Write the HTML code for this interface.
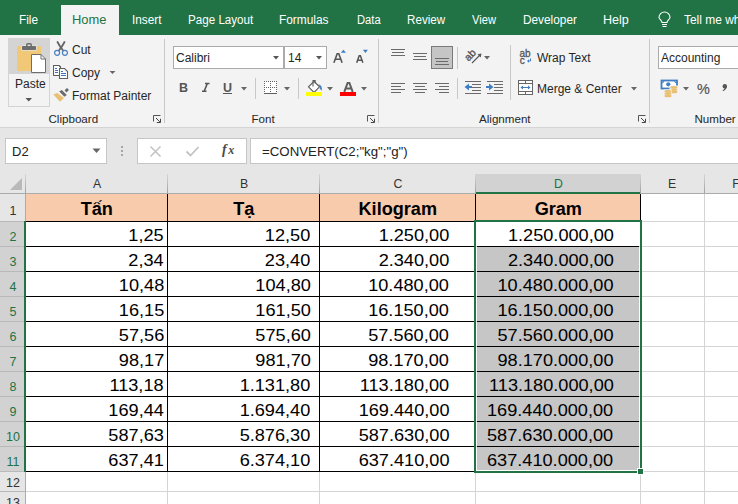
<!DOCTYPE html>
<html><head><meta charset="utf-8">
<style>
*{margin:0;padding:0;box-sizing:border-box}
html,body{width:738px;height:504px;overflow:hidden;background:#fff;font-family:"Liberation Sans",sans-serif}
.a{position:absolute}
.t{position:absolute;white-space:nowrap;line-height:1}
#tabs{left:0;top:0;width:738px;height:35px;background:#217346}
.tab{color:#fff;font-size:12.5px;top:14px;transform-origin:0 0}
#rib{left:0;top:35px;width:738px;height:92px;background:#f3f3f3}
.rl{color:#262626;font-size:12px}
.sep{position:absolute;width:1px;background:#c8c8c8}
#fb{left:0;top:127px;width:738px;height:67px;background:#e6e6e6}
.hd{top:178px;font-size:12.3px;text-align:center}
.rn{left:0.5px;width:25px;text-align:center;font-size:12.5px}
.hb{top:201px;font-size:17.5px;font-weight:bold;text-align:center;color:#000;transform:translateX(0.8px) scaleX(1.035)}
.dv{font-size:17.3px;color:#000;transform:scaleX(1.05);transform-origin:100% 0}
</style></head><body>
<!-- tab bar -->
<div class="a" id="tabs"></div>
<div class="a" style="left:61px;top:5px;width:58px;height:30px;background:#f3f3f3"></div>
<div class="t tab" style="left:19.00px;transform:scaleX(0.947);color:#fff">File</div>
<div class="t tab" style="left:72.00px;transform:scaleX(1.031);color:#217346">Home</div>
<div class="t tab" style="left:132.20px;transform:scaleX(0.942);color:#fff">Insert</div>
<div class="t tab" style="left:188.20px;transform:scaleX(0.930);color:#fff">Page Layout</div>
<div class="t tab" style="left:279.00px;transform:scaleX(0.951);color:#fff">Formulas</div>
<div class="t tab" style="left:356.60px;transform:scaleX(0.896);color:#fff">Data</div>
<div class="t tab" style="left:407.20px;transform:scaleX(0.932);color:#fff">Review</div>
<div class="t tab" style="left:472.00px;transform:scaleX(0.893);color:#fff">View</div>
<div class="t tab" style="left:523.00px;transform:scaleX(0.946);color:#fff">Developer</div>
<div class="t tab" style="left:603.00px;transform:scaleX(1.005);color:#fff">Help</div>
<div class="t tab" style="left:683.9px;transform:scaleX(0.955);color:#fff">Tell me what</div>
<svg class="a" style="left:656px;top:10px" width="17" height="20" viewBox="0 0 17 20">
  <path d="M6 12.5 C6 10.5 3 9 3 7.5 A5.5 5.5 0 0 1 14 7.5 C14 9 11 10.5 11 12.5 Z" fill="none" stroke="#fff" stroke-width="1.1"/>
  <path d="M6 14.5 H11 M6.5 16.5 H10.5" stroke="#fff" stroke-width="1"/>
</svg>
<!-- ribbon -->
<div class="a" id="rib"></div>
<div class="a" style="left:0;top:127px;width:738px;height:1px;background:#d4d4d4"></div>
<!-- Clipboard group -->
<div class="a" style="left:8px;top:38px;width:42px;height:69px;border:1px solid #d4d4d4;background:#f3f3f3"></div>
<div class="a" style="left:8px;top:38px;width:42px;height:36px;background:#d4d4d4"></div>
<svg class="a" style="left:8px;top:38px" width="42" height="36" viewBox="0 0 42 36">
  <rect x="9" y="8" width="24" height="25" rx="1.5" fill="#f0c877"/>
  <rect x="13.3" y="7.3" width="15.4" height="5.4" rx="1" fill="#e4e4e4"/>
  <rect x="14" y="8" width="14" height="4" rx="0.8" fill="#6d6d6d"/>
  <rect x="18.75" y="5.75" width="4.5" height="3" rx="1" fill="none" stroke="#6d6d6d" stroke-width="1.5"/>
  <path d="M23.5 16.5 H33 L37.5 21 V34.5 H23.5 Z" fill="#fff" stroke="#6d6d6d" stroke-width="1"/>
  <path d="M33 16.5 V21 H37.5" fill="none" stroke="#6d6d6d" stroke-width="1"/>
</svg>
<div class="t rl" style="left:15px;top:78px;font-size:12px">Paste</div>
<svg class="a" style="left:25px;top:97px" width="8" height="5"><path d="M0.5 1 H7 L3.75 4.5 Z" fill="#555"/></svg>

<svg class="a" style="left:53px;top:40px" width="17" height="17" viewBox="0 0 17 17">
  <path d="M4.5 2 Q6.5 6 10.3 10.8 M11.5 2 Q9.5 6 5.7 10.8" stroke="#666" stroke-width="1.8" fill="none" stroke-linecap="round"/>
  <circle cx="4.1" cy="12.8" r="2.5" fill="#f3f3f3" stroke="#4a80c0" stroke-width="1.2"/>
  <circle cx="11.9" cy="12.8" r="2.5" fill="#f3f3f3" stroke="#4a80c0" stroke-width="1.2"/>
</svg>
<div class="t rl" style="left:72px;top:44px">Cut</div>
<svg class="a" style="left:53px;top:64px" width="17" height="16" viewBox="0 0 17 16">
  <path d="M0.5 11.5 V1.5 H6 L7.5 3 V4.5" fill="#fff" stroke="#5f5f5f" stroke-width="1.1"/>
  <rect x="0.5" y="1.5" width="6" height="10" fill="#fff"/>
  <path d="M0.5 11.5 V1.5 H6 L7.5 3 V4.5 M0.5 11.5 H6" fill="none" stroke="#5f5f5f" stroke-width="1.1"/>
  <path d="M6.5 14.5 V4.5 H11.5 L14.5 7.5 V14.5 Z" fill="#fff" stroke="#5f5f5f" stroke-width="1.1"/>
  <path d="M2 4.5 H4 M2 6.5 H5 M2 8.5 H5 M8 7.5 H10 M8 9.5 H13 M8 11.5 H13" stroke="#3a75b8" stroke-width="1.1"/>
</svg>
<div class="t rl" style="left:72px;top:67px">Copy</div>
<svg class="a" style="left:109px;top:70px" width="7" height="5"><path d="M0.5 1 H6.5 L3.5 4 Z" fill="#666"/></svg>
<svg class="a" style="left:53px;top:87px" width="17" height="16" viewBox="0 0 17 16">
  <path d="M0.3 7.5 L4.2 6 L11 11 L7 14.7 Z" fill="#e9bf72"/>
  <path d="M6.2 4.6 L8.8 3.1 L13.8 7.9 L11.4 9.7 Z" fill="#6a6a6a"/>
  <path d="M14 1.1 L16 2.9 L13.4 5.5 L11.6 3.3 Z" fill="#6a6a6a"/>
</svg>
<div class="t rl" style="left:72px;top:90px">Format Painter</div>
<div class="t rl" style="left:48.5px;top:113px;font-size:11.6px">Clipboard</div>
<svg class="a" style="left:153px;top:115px" width="9" height="9" viewBox="0 0 9 9">
  <path d="M0.5 0.5 H7.5 M0.5 0.5 V6.5" stroke="#555" stroke-width="1" fill="none"/>
  <path d="M3 3 L6.8 6.8 M3.8 7.5 H7.5 V3.8" stroke="#444" stroke-width="1" fill="none"/>
</svg>
<div class="sep" style="left:164px;top:39px;height:84px"></div>

<!-- Font group -->
<div class="a" style="left:173px;top:46px;width:111px;height:23px;background:#fff;border:1px solid #ababab"></div>
<div class="a" style="left:284px;top:46px;width:43px;height:23px;background:#fff;border:1px solid #ababab"></div>
<div class="t" style="left:176px;top:52px;font-size:12px;color:#262626">Calibri</div>
<svg class="a" style="left:273px;top:56px" width="7" height="4"><path d="M0 0 H6 L3 3.5 Z" fill="#555"/></svg>
<div class="t" style="left:288px;top:52px;font-size:12px;color:#262626">14</div>
<svg class="a" style="left:316px;top:56px" width="7" height="4"><path d="M0 0 H6 L3 3.5 Z" fill="#555"/></svg>
<svg class="a" style="left:328px;top:44px" width="46" height="26" viewBox="0 0 46 26">
  <path d="M5.9 18.8 L9.2 9.8 H10.8 L14.1 18.8 M7.6 15.3 H12.4" stroke="#555" stroke-width="1.6" fill="none"/>
  <path d="M12.8 8.8 H18 L15.4 5.8 Z" fill="#3f7ec2"/>
  <path d="M28.7 18.8 L31.2 11.7 H32.4 L34.9 18.8 M30.1 16.2 H33.5" stroke="#555" stroke-width="1.5" fill="none"/>
  <path d="M34.9 5.8 H39.9 L37.4 8.9 Z" fill="#3f7ec2"/>
</svg>
<div class="t" style="left:179px;top:82px;font-size:12.5px;font-weight:bold;color:#555">B</div>
<svg class="a" style="left:200px;top:82px" width="12" height="12" viewBox="0 0 12 12"><path d="M5 1.5 H9.5 M2 9.3 H6.5 M7.3 1.5 L4.2 9.3" stroke="#555" stroke-width="1.6" fill="none"/></svg>
<div class="t" style="left:223px;top:82px;font-size:12.5px;font-weight:bold;color:#555">U</div>
<div class="a" style="left:223px;top:93px;width:9px;height:1px;background:#555"></div>
<svg class="a" style="left:241px;top:87px" width="7" height="4"><path d="M0 0 H6 L3 3.5 Z" fill="#666"/></svg>
<div class="sep" style="left:255px;top:78px;height:21px"></div>
<svg class="a" style="left:264px;top:81px" width="14" height="14"><rect x="0" y="0" width="13" height="13" fill="#fff"/><rect x="0" y="0" width="1" height="1" fill="#606060"/><rect x="2" y="0" width="1" height="1" fill="#606060"/><rect x="4" y="0" width="1" height="1" fill="#606060"/><rect x="6" y="0" width="1" height="1" fill="#606060"/><rect x="8" y="0" width="1" height="1" fill="#606060"/><rect x="10" y="0" width="1" height="1" fill="#606060"/><rect x="12" y="0" width="1" height="1" fill="#606060"/><rect x="0" y="2" width="1" height="1" fill="#606060"/><rect x="6" y="2" width="1" height="1" fill="#606060"/><rect x="12" y="2" width="1" height="1" fill="#606060"/><rect x="0" y="4" width="1" height="1" fill="#606060"/><rect x="6" y="4" width="1" height="1" fill="#606060"/><rect x="12" y="4" width="1" height="1" fill="#606060"/><rect x="0" y="6" width="1" height="1" fill="#606060"/><rect x="2" y="6" width="1" height="1" fill="#606060"/><rect x="4" y="6" width="1" height="1" fill="#606060"/><rect x="6" y="6" width="1" height="1" fill="#606060"/><rect x="8" y="6" width="1" height="1" fill="#606060"/><rect x="10" y="6" width="1" height="1" fill="#606060"/><rect x="12" y="6" width="1" height="1" fill="#606060"/><rect x="0" y="8" width="1" height="1" fill="#606060"/><rect x="6" y="8" width="1" height="1" fill="#606060"/><rect x="12" y="8" width="1" height="1" fill="#606060"/><rect x="0" y="10" width="1" height="1" fill="#606060"/><rect x="6" y="10" width="1" height="1" fill="#606060"/><rect x="12" y="10" width="1" height="1" fill="#606060"/><rect x="0" y="12" width="13" height="1" fill="#606060"/></svg>
<svg class="a" style="left:284px;top:87px" width="7" height="4"><path d="M0 0 H6 L3 3.5 Z" fill="#666"/></svg>
<div class="sep" style="left:298px;top:78px;height:21px"></div>
<svg class="a" style="left:305px;top:79px" width="18" height="18" viewBox="0 0 18 18">
  <path d="M3.5 7.8 L9 2.3 L14.5 7.8 L9 13.3 Z" fill="#fff" stroke="#5f5f5f" stroke-width="1.2"/>
  <path d="M8 7.5 V1.5 H10.2 V4.5" fill="none" stroke="#5f5f5f" stroke-width="1.1"/>
  <path d="M13.3 5.2 Q17.6 6 16.8 11.8 L14.6 9.6 L15.2 8 Z" fill="#3f7ec2"/>
  <rect x="1" y="13" width="16" height="4" fill="#ffff00"/>
</svg>
<svg class="a" style="left:327px;top:87px" width="7" height="4"><path d="M0 0 H6 L3 3.5 Z" fill="#666"/></svg>
<svg class="a" style="left:339px;top:79px" width="18" height="18" viewBox="0 0 18 18">
  <path d="M5.3 12.8 L8.6 3.9 H10.4 L13.7 12.8 M6.8 9.6 H12.2" stroke="#5f5f5f" stroke-width="2" fill="none"/>
  <rect x="1" y="13" width="16" height="4" fill="#ff0000"/>
</svg>
<svg class="a" style="left:361px;top:87px" width="7" height="4"><path d="M0 0 H6 L3 3.5 Z" fill="#666"/></svg>
<div class="t rl" style="left:251.5px;top:113px;font-size:11.6px">Font</div>
<svg class="a" style="left:367px;top:115px" width="9" height="9" viewBox="0 0 9 9">
  <path d="M0.5 0.5 H7.5 M0.5 0.5 V6.5" stroke="#555" stroke-width="1" fill="none"/>
  <path d="M3 3 L6.8 6.8 M3.8 7.5 H7.5 V3.8" stroke="#444" stroke-width="1" fill="none"/>
</svg>
<div class="sep" style="left:378px;top:39px;height:84px"></div>

<!-- Alignment group -->
<svg class="a" style="left:390px;top:48px" width="16" height="12"><path d="M1 1.5 H15 M2 4.5 H14 M1 7.5 H15" stroke="#6a6a6a" stroke-width="1"/></svg>
<svg class="a" style="left:412px;top:52px" width="16" height="12"><path d="M1 1.5 H15 M2 4.5 H14 M1 7.5 H15" stroke="#6a6a6a" stroke-width="1"/></svg>
<div class="a" style="left:431px;top:46px;width:22px;height:23px;background:#c5c5c5;border:1px solid #7a7a7a"></div>
<svg class="a" style="left:434px;top:57px" width="16" height="12"><path d="M1 1.5 H15 M2 4.5 H14 M1 7.5 H15" stroke="#6a6a6a" stroke-width="1"/></svg>
<div class="sep" style="left:457px;top:47px;height:22px"></div>
<svg class="a" style="left:462px;top:46px" width="24" height="22" viewBox="0 0 24 22">
  <text x="8.5" y="12.5" text-anchor="middle" font-family="Liberation Sans" font-size="10.5" fill="#555" stroke="#555" stroke-width="0.35" transform="rotate(-45 8.5 9.5)">ab</text>
  <path d="M10 17 L18.5 8.5" stroke="#555" stroke-width="1.1" fill="none"/>
  <path d="M19.5 7.5 L15.5 8.3 L18.7 11.5 Z" fill="#555"/>
</svg>
<svg class="a" style="left:484px;top:56px" width="7" height="4"><path d="M0 0 H6 L3 3.5 Z" fill="#666"/></svg>

<svg class="a" style="left:390px;top:82px" width="16" height="14"><path d="M1 1.5 H15 M1 4.5 H11 M1 7.5 H15 M1 10.5 H11" stroke="#6a6a6a" stroke-width="1"/></svg>
<svg class="a" style="left:412px;top:82px" width="16" height="14"><path d="M1 1.5 H15 M3 4.5 H13 M1 7.5 H15 M3 10.5 H13" stroke="#6a6a6a" stroke-width="1"/></svg>
<svg class="a" style="left:434px;top:82px" width="16" height="14"><path d="M1 1.5 H15 M5 4.5 H15 M1 7.5 H15 M5 10.5 H15" stroke="#6a6a6a" stroke-width="1"/></svg>
<div class="sep" style="left:457px;top:78px;height:21px"></div>
<svg class="a" style="left:464px;top:80px" width="18" height="15" viewBox="0 0 18 15">
  <path d="M1 1.5 H17 M8 4.5 H17 M8 7.5 H17 M8 10.5 H17 M1 13.5 H17" stroke="#6a6a6a" stroke-width="1"/>
  <path d="M0.5 7 L5 3.5 V10.5 Z" fill="#3f7ec2"/><path d="M4 7 H8" stroke="#3f7ec2" stroke-width="2"/>
</svg>
<svg class="a" style="left:486px;top:80px" width="18" height="15" viewBox="0 0 18 15">
  <path d="M1 1.5 H17 M8 4.5 H17 M8 7.5 H17 M8 10.5 H17 M1 13.5 H17" stroke="#6a6a6a" stroke-width="1"/>
  <path d="M7.5 7 L3 3.5 V10.5 Z" fill="#3f7ec2"/><path d="M0 7 H4" stroke="#3f7ec2" stroke-width="2"/>
</svg>
<div class="sep" style="left:510px;top:45px;height:55px"></div>
<svg class="a" style="left:517px;top:48px" width="18" height="18" viewBox="0 0 18 18">
  <text x="2.5" y="8.6" font-family="Liberation Sans" font-size="10" fill="#555" stroke="#555" stroke-width="0.3">ab</text>
  <text x="2.8" y="15.8" font-family="Liberation Sans" font-size="10" fill="#555" stroke="#555" stroke-width="0.3">c</text>
  <path d="M13.5 10.5 V13 H11" stroke="#3f7ec2" stroke-width="1" fill="none"/><path d="M10 13 L12 11.3 V14.7 Z" fill="#3f7ec2"/>
</svg>
<div class="t rl" style="left:537px;top:52px">Wrap Text</div>
<svg class="a" style="left:517px;top:79px" width="17" height="17" viewBox="0 0 17 17">
  <rect x="1.5" y="1.5" width="14" height="14" fill="#fff" stroke="#666" stroke-width="1"/>
  <path d="M1.5 4.5 H15.5 M1.5 12.5 H15.5 M8.5 1.5 V4.5 M8.5 12.5 V15.5" stroke="#666" stroke-width="1"/>
  <path d="M4.5 8.5 H12.5" stroke="#3f7ec2" stroke-width="1"/><path d="M3.5 8.5 L6 6.5 V10.5 Z M13.5 8.5 L11 6.5 V10.5 Z" fill="#3f7ec2"/>
</svg>
<div class="t rl" style="left:537px;top:83px">Merge &amp; Center</div>
<svg class="a" style="left:631px;top:87px" width="7" height="4"><path d="M0 0 H6 L3 3.5 Z" fill="#666"/></svg>
<div class="t rl" style="left:479px;top:113px;font-size:11.6px">Alignment</div>
<svg class="a" style="left:638px;top:115px" width="9" height="9" viewBox="0 0 9 9">
  <path d="M0.5 0.5 H7.5 M0.5 0.5 V6.5" stroke="#555" stroke-width="1" fill="none"/>
  <path d="M3 3 L6.8 6.8 M3.8 7.5 H7.5 V3.8" stroke="#444" stroke-width="1" fill="none"/>
</svg>
<div class="sep" style="left:649px;top:39px;height:84px"></div>

<!-- Number group -->
<div class="a" style="left:658px;top:46px;width:90px;height:23px;background:#fff;border:1px solid #ababab"></div>
<div class="t" style="left:661px;top:52px;font-size:12px;color:#262626">Accounting</div>
<svg class="a" style="left:660px;top:79px" width="19" height="19" viewBox="0 0 19 19">
  <rect x="1.5" y="1.5" width="15.5" height="8" fill="#fff" stroke="#3f7ec2" stroke-width="1.8"/>
  <path d="M1.5 4 Q4 4 4 1.5 M17 4 Q14.5 4 14.5 1.5" stroke="#3f7ec2" stroke-width="1" fill="none"/>
  <circle cx="8.3" cy="5.3" r="2.1" fill="#3f7ec2"/>
  <rect x="9.5" y="6.5" width="8.5" height="8" fill="#f3f3f3"/>
  <ellipse cx="13.8" cy="8.3" rx="3.6" ry="1.3" fill="#e9bf72"/>
  <ellipse cx="13.8" cy="10.6" rx="3.6" ry="1.3" fill="#e9bf72"/>
  <ellipse cx="13.8" cy="12.9" rx="3.6" ry="1.3" fill="#e9bf72"/>
  <rect x="4" y="10.5" width="8" height="8.5" fill="#f3f3f3"/>
  <ellipse cx="8" cy="12.3" rx="3.6" ry="1.3" fill="#e9bf72"/>
  <ellipse cx="8" cy="14.6" rx="3.6" ry="1.3" fill="#e9bf72"/>
  <ellipse cx="8" cy="16.9" rx="3.6" ry="1.3" fill="#e9bf72"/>
</svg>
<svg class="a" style="left:683px;top:87px" width="7" height="4"><path d="M0 0 H6 L3 3.5 Z" fill="#666"/></svg>
<div class="t" style="left:697px;top:81px;font-size:15.5px;color:#555;-webkit-text-stroke:0.2px #555;transform:scaleX(0.93);transform-origin:0 0">%</div>
<svg class="a" style="left:720px;top:82px" width="9" height="11" viewBox="0 0 9 11"><circle cx="4.8" cy="4.2" r="2.2" fill="#555"/><path d="M6.8 4.5 Q6.6 7.5 3 9.2 L2.6 8.5 Q4.8 7 4.8 5.5 Z" fill="#555"/></svg>
<div class="t rl" style="left:694.5px;top:113px;font-size:11.6px">Number</div>

<!-- formula bar area -->
<div class="a" style="left:0;top:128px;width:738px;height:66px;background:#e6e6e6"></div>
<div class="a" style="left:5px;top:138px;width:102px;height:26px;background:#fff;border:1px solid #c6c6c6"></div>
<div class="t" style="left:12px;top:145px;font-size:13px;color:#222">D2</div>
<div class="a" style="left:137px;top:138px;width:110px;height:26px;background:#fff;border:1px solid #c6c6c6"></div>
<div class="a" style="left:250px;top:138px;width:500px;height:26px;background:#fff;border:1px solid #c6c6c6"></div>
<div class="t" style="left:262px;top:145px;font-size:13px;color:#222;transform:scaleX(1.02);transform-origin:0 0">=CONVERT(C2;"kg";"g")</div>
<svg class="a" style="left:92px;top:148px" width="9" height="6"><path d="M0.5 0.5 H8.5 L4.5 5 Z" fill="#666"/></svg>
<div class="a" style="left:121px;top:146px;width:2px;height:2px;background:#a6a6a6"></div>
<div class="a" style="left:121px;top:150px;width:2px;height:2px;background:#a6a6a6"></div>
<div class="a" style="left:121px;top:154px;width:2px;height:2px;background:#a6a6a6"></div>
<svg class="a" style="left:149px;top:145px" width="13" height="13" viewBox="0 0 13 13"><path d="M1.5 1.5 L11.5 11.5 M11.5 1.5 L1.5 11.5" stroke="#c3c3c3" stroke-width="1.5"/></svg>
<svg class="a" style="left:185px;top:145px" width="15" height="13" viewBox="0 0 15 13"><path d="M1.5 6.5 L5.5 10.5 L13.5 2" stroke="#c3c3c3" stroke-width="1.8" fill="none"/></svg>
<div class="t" style="left:222px;top:143px;font-size:14px;font-style:italic;font-weight:bold;font-family:'Liberation Serif',serif;color:#4a4a4a">f<span style="font-size:12px;margin-left:1.5px">x</span></div>


<!-- grid -->
<div class="a" style="left:26px;top:194px;width:712px;height:310px;background:#fff"></div>
<div class="a" style="left:0;top:194px;width:25px;height:310px;background:#e6e6e6"></div>
<div class="a" style="left:476px;top:174px;width:164px;height:18px;background:#d2d2d2"></div>
<div class="a" style="left:0;top:193px;width:738px;height:1px;background:#ababab"></div>
<div class="a" style="left:476px;top:192px;width:164px;height:2px;background:#217346"></div>
<div class="a" style="left:167px;top:174px;width:1px;height:19px;background:linear-gradient(#d6d6d6,#a0a0a0)"></div>
<div class="a" style="left:319px;top:174px;width:1px;height:19px;background:linear-gradient(#d6d6d6,#a0a0a0)"></div>
<div class="a" style="left:475px;top:174px;width:1px;height:19px;background:linear-gradient(#d6d6d6,#a0a0a0)"></div>
<div class="a" style="left:640px;top:174px;width:1px;height:19px;background:linear-gradient(#d6d6d6,#a0a0a0)"></div>
<div class="a" style="left:704px;top:174px;width:1px;height:19px;background:linear-gradient(#d6d6d6,#a0a0a0)"></div>
<div class="a" style="left:25px;top:174px;width:1px;height:19px;background:linear-gradient(#d6d6d6,#a0a0a0)"></div>
<div class="a" style="left:25px;top:193px;width:1px;height:311px;background:#ababab"></div>
<svg class="a" style="left:9px;top:177px" width="14" height="14"><path d="M13 1 V13 H1 Z" fill="#b9b9b9"/></svg>
<div class="t hd" style="left:26px;width:142px;color:#333">A</div>
<div class="t hd" style="left:168px;width:152px;color:#333">B</div>
<div class="t hd" style="left:320px;width:156px;color:#333">C</div>
<div class="t hd" style="left:476px;width:165px;color:#217346">D</div>
<div class="t hd" style="left:640px;width:64px;color:#333">E</div>
<div class="t hd" style="left:704px;width:64px;color:#333">F</div>
<div class="a" style="left:0;top:222px;width:24px;height:249px;background:#d2d2d2"></div>
<div class="a" style="left:0;top:221px;width:25px;height:1px;background:#b9b9b9"></div>
<div class="a" style="left:0;top:246px;width:25px;height:1px;background:#b9b9b9"></div>
<div class="a" style="left:0;top:271px;width:25px;height:1px;background:#b9b9b9"></div>
<div class="a" style="left:0;top:296px;width:25px;height:1px;background:#b9b9b9"></div>
<div class="a" style="left:0;top:321px;width:25px;height:1px;background:#b9b9b9"></div>
<div class="a" style="left:0;top:346px;width:25px;height:1px;background:#b9b9b9"></div>
<div class="a" style="left:0;top:371px;width:25px;height:1px;background:#b9b9b9"></div>
<div class="a" style="left:0;top:396px;width:25px;height:1px;background:#b9b9b9"></div>
<div class="a" style="left:0;top:421px;width:25px;height:1px;background:#b9b9b9"></div>
<div class="a" style="left:0;top:446px;width:25px;height:1px;background:#b9b9b9"></div>
<div class="a" style="left:0;top:471px;width:25px;height:1px;background:#b9b9b9"></div>
<div class="a" style="left:0;top:491px;width:25px;height:1px;background:#b9b9b9"></div>
<div class="a" style="left:0;top:516px;width:25px;height:1px;background:#b9b9b9"></div>
<div class="a" style="left:24px;top:221px;width:2px;height:251px;background:#217346"></div>
<div class="t rn" style="top:205px;color:#333">1</div>
<div class="t rn" style="top:231px;color:#217346">2</div>
<div class="t rn" style="top:256px;color:#217346">3</div>
<div class="t rn" style="top:281px;color:#217346">4</div>
<div class="t rn" style="top:306px;color:#217346">5</div>
<div class="t rn" style="top:331px;color:#217346">6</div>
<div class="t rn" style="top:356px;color:#217346">7</div>
<div class="t rn" style="top:381px;color:#217346">8</div>
<div class="t rn" style="top:406px;color:#217346">9</div>
<div class="t rn" style="top:431px;color:#217346">10</div>
<div class="t rn" style="top:456px;color:#217346">11</div>
<div class="t rn" style="top:477px;color:#333">12</div>
<div class="t rn" style="top:497px;color:#333">13</div>
<div class="a" style="left:26px;top:221px;width:712px;height:1px;background:#d4d4d4"></div>
<div class="a" style="left:26px;top:246px;width:712px;height:1px;background:#d4d4d4"></div>
<div class="a" style="left:26px;top:271px;width:712px;height:1px;background:#d4d4d4"></div>
<div class="a" style="left:26px;top:296px;width:712px;height:1px;background:#d4d4d4"></div>
<div class="a" style="left:26px;top:321px;width:712px;height:1px;background:#d4d4d4"></div>
<div class="a" style="left:26px;top:346px;width:712px;height:1px;background:#d4d4d4"></div>
<div class="a" style="left:26px;top:371px;width:712px;height:1px;background:#d4d4d4"></div>
<div class="a" style="left:26px;top:396px;width:712px;height:1px;background:#d4d4d4"></div>
<div class="a" style="left:26px;top:421px;width:712px;height:1px;background:#d4d4d4"></div>
<div class="a" style="left:26px;top:446px;width:712px;height:1px;background:#d4d4d4"></div>
<div class="a" style="left:26px;top:471px;width:712px;height:1px;background:#d4d4d4"></div>
<div class="a" style="left:26px;top:491px;width:712px;height:1px;background:#d4d4d4"></div>
<div class="a" style="left:26px;top:516px;width:712px;height:1px;background:#d4d4d4"></div>
<div class="a" style="left:167px;top:194px;width:1px;height:310px;background:#d4d4d4"></div>
<div class="a" style="left:319px;top:194px;width:1px;height:310px;background:#d4d4d4"></div>
<div class="a" style="left:475px;top:194px;width:1px;height:310px;background:#d4d4d4"></div>
<div class="a" style="left:640px;top:194px;width:1px;height:310px;background:#d4d4d4"></div>
<div class="a" style="left:704px;top:194px;width:1px;height:310px;background:#d4d4d4"></div>
<div class="a" style="left:26px;top:194px;width:614px;height:27px;background:#f8cbad"></div>
<div class="a" style="left:477px;top:247px;width:162px;height:223px;background:#c6c6c6"></div>
<div class="a" style="left:26px;top:221px;width:449px;height:1px;background:#000"></div>
<div class="a" style="left:26px;top:246px;width:449px;height:1px;background:#000"></div>
<div class="a" style="left:477px;top:246px;width:162px;height:1px;background:#000"></div>
<div class="a" style="left:26px;top:271px;width:449px;height:1px;background:#000"></div>
<div class="a" style="left:477px;top:271px;width:162px;height:1px;background:#000"></div>
<div class="a" style="left:26px;top:296px;width:449px;height:1px;background:#000"></div>
<div class="a" style="left:477px;top:296px;width:162px;height:1px;background:#000"></div>
<div class="a" style="left:26px;top:321px;width:449px;height:1px;background:#000"></div>
<div class="a" style="left:477px;top:321px;width:162px;height:1px;background:#000"></div>
<div class="a" style="left:26px;top:346px;width:449px;height:1px;background:#000"></div>
<div class="a" style="left:477px;top:346px;width:162px;height:1px;background:#000"></div>
<div class="a" style="left:26px;top:371px;width:449px;height:1px;background:#000"></div>
<div class="a" style="left:477px;top:371px;width:162px;height:1px;background:#000"></div>
<div class="a" style="left:26px;top:396px;width:449px;height:1px;background:#000"></div>
<div class="a" style="left:477px;top:396px;width:162px;height:1px;background:#000"></div>
<div class="a" style="left:26px;top:421px;width:449px;height:1px;background:#000"></div>
<div class="a" style="left:477px;top:421px;width:162px;height:1px;background:#000"></div>
<div class="a" style="left:26px;top:446px;width:449px;height:1px;background:#000"></div>
<div class="a" style="left:477px;top:446px;width:162px;height:1px;background:#000"></div>
<div class="a" style="left:26px;top:471px;width:449px;height:1px;background:#000"></div>
<div class="a" style="left:167px;top:194px;width:1px;height:278px;background:#000"></div>
<div class="a" style="left:319px;top:194px;width:1px;height:278px;background:#000"></div>
<div class="a" style="left:475px;top:194px;width:1px;height:278px;background:#000"></div>
<div class="a" style="left:640px;top:194px;width:1px;height:278px;background:#000"></div>
<div class="a" style="left:474px;top:220px;width:168px;height:253px;border:2px solid #217346"></div>
<div class="a" style="left:637px;top:468px;width:7px;height:7px;background:#fff"></div>
<div class="a" style="left:638px;top:469px;width:5px;height:5px;background:#217346"></div>
<div class="t hb" style="left:25px;width:142px">Tấn</div>
<div class="t hb" style="left:167px;width:152px">Tạ</div>
<div class="t hb" style="left:319px;width:156px">Kilogram</div>
<div class="t hb" style="left:475px;width:165px">Gram</div>
<div class="t dv" style="right:574.0px;top:227px">1,25</div>
<div class="t dv" style="right:427.5px;top:227px">12,50</div>
<div class="t dv" style="right:289.0px;top:227px">1.250,00</div>
<div class="t dv" style="right:124.5px;top:227px">1.250.000,00</div>
<div class="t dv" style="right:574.0px;top:252px">2,34</div>
<div class="t dv" style="right:427.5px;top:252px">23,40</div>
<div class="t dv" style="right:289.0px;top:252px">2.340,00</div>
<div class="t dv" style="right:124.5px;top:252px">2.340.000,00</div>
<div class="t dv" style="right:574.0px;top:277px">10,48</div>
<div class="t dv" style="right:427.5px;top:277px">104,80</div>
<div class="t dv" style="right:289.0px;top:277px">10.480,00</div>
<div class="t dv" style="right:124.5px;top:277px">10.480.000,00</div>
<div class="t dv" style="right:574.0px;top:302px">16,15</div>
<div class="t dv" style="right:427.5px;top:302px">161,50</div>
<div class="t dv" style="right:289.0px;top:302px">16.150,00</div>
<div class="t dv" style="right:124.5px;top:302px">16.150.000,00</div>
<div class="t dv" style="right:574.0px;top:327px">57,56</div>
<div class="t dv" style="right:427.5px;top:327px">575,60</div>
<div class="t dv" style="right:289.0px;top:327px">57.560,00</div>
<div class="t dv" style="right:124.5px;top:327px">57.560.000,00</div>
<div class="t dv" style="right:574.0px;top:352px">98,17</div>
<div class="t dv" style="right:427.5px;top:352px">981,70</div>
<div class="t dv" style="right:289.0px;top:352px">98.170,00</div>
<div class="t dv" style="right:124.5px;top:352px">98.170.000,00</div>
<div class="t dv" style="right:574.0px;top:377px">113,18</div>
<div class="t dv" style="right:427.5px;top:377px">1.131,80</div>
<div class="t dv" style="right:289.0px;top:377px">113.180,00</div>
<div class="t dv" style="right:124.5px;top:377px">113.180.000,00</div>
<div class="t dv" style="right:574.0px;top:402px">169,44</div>
<div class="t dv" style="right:427.5px;top:402px">1.694,40</div>
<div class="t dv" style="right:289.0px;top:402px">169.440,00</div>
<div class="t dv" style="right:124.5px;top:402px">169.440.000,00</div>
<div class="t dv" style="right:574.0px;top:427px">587,63</div>
<div class="t dv" style="right:427.5px;top:427px">5.876,30</div>
<div class="t dv" style="right:289.0px;top:427px">587.630,00</div>
<div class="t dv" style="right:124.5px;top:427px">587.630.000,00</div>
<div class="t dv" style="right:574.0px;top:452px">637,41</div>
<div class="t dv" style="right:427.5px;top:452px">6.374,10</div>
<div class="t dv" style="right:289.0px;top:452px">637.410,00</div>
<div class="t dv" style="right:124.5px;top:452px">637.410.000,00</div>
</body></html>
